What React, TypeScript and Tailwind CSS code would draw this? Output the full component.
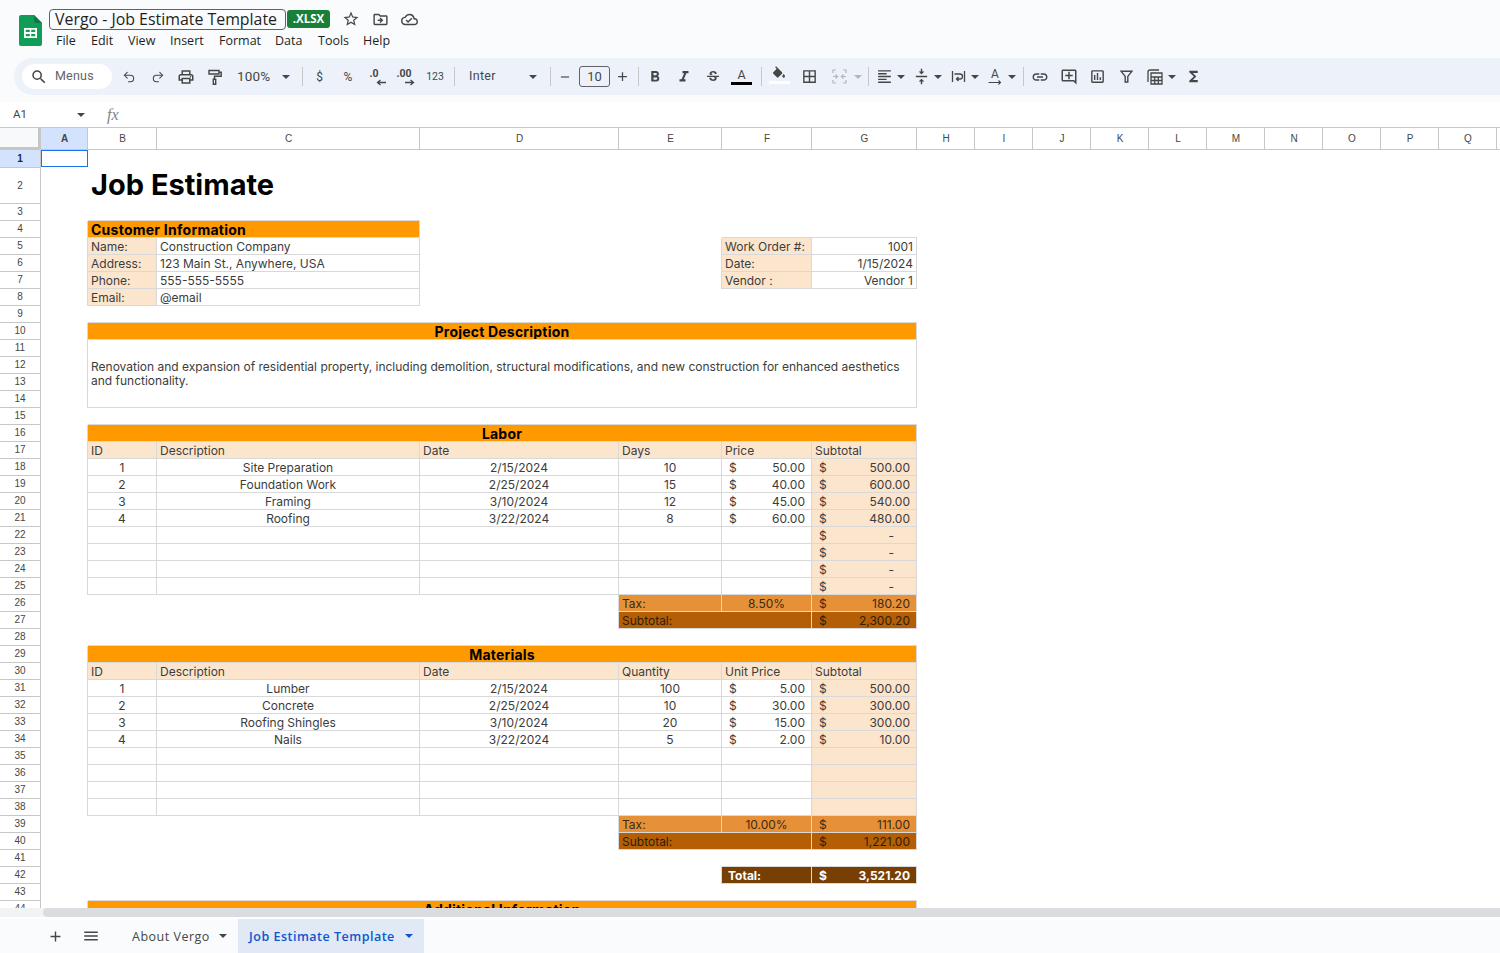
import React from "react";
import {
  MdOutlinePrint, MdSearch, MdAdd, MdRemove, MdFormatBold, MdFormatItalic,
  MdStrikethroughS, MdBorderAll, MdFormatAlignLeft, MdVerticalAlignCenter, MdLink, MdOutlineAddComment,
  MdOutlineAssessment, MdFunctions, MdStarBorder, MdOutlineDriveFileMove,
  MdOutlineCloudDone, MdMenu,
} from "react-icons/md";
import { Undo2, Redo2 } from "lucide-react";

const ink = "#444746";

function Caret({ className = "border-t-[#444746]" }: { className?: string }) {
  return <span className={`w-0 h-0 border-x-[4px] border-t-[4px] border-x-transparent ${className}`} />;
}

function Btn({ className = "w-[29px]", children }: { className?: string; children: React.ReactNode }) {
  return <div className={`flex items-center justify-center shrink-0 h-full text-[#444746] ${className}`}>{children}</div>;
}

function Sep({ className = "" }: { className?: string }) {
  return <div className={`w-px h-[19px] bg-[#c7c7c7] shrink-0 ${className}`} />;
}

function Logo() {
  return (
    <svg width="23" height="31" viewBox="0 0 23 31" className="shrink-0">
      <path d="M2 0h13l8 8v21a2 2 0 0 1-2 2H2a2 2 0 0 1-2-2V2a2 2 0 0 1 2-2z" fill="#0f9d58" />
      <path d="M15 0l8 8h-6a2 2 0 0 1-2-2z" fill="#0b7a44" />
      <path d="M5 13h13v10H5z M6.8 14.8v2.3h4v-2.3z M12.2 14.8v2.3h4v-2.3z M6.8 18.9v2.3h4v-2.3z M12.2 18.9v2.3h4v-2.3z" fill="#fff" fillRule="evenodd" />
    </svg>
  );
}

function Decimal({ label, right }: { label: string; right?: boolean }) {
  return (
    <div className="relative w-[20px] h-[20px]">
      <span className={`absolute top-[1px] text-[10.5px] font-bold leading-[12px] font-['Roboto',sans-serif] text-[#444746] ${right ? "left-[1px]" : "left-[3px]"}`}>{label}</span>
      <svg width="10" height="7" viewBox="0 0 10 7" className="absolute top-[12px] left-[9px]">
        {right ? (
          <path d="M0 3.5h8M5.5 1L8.5 3.5 5.5 6" fill="none" stroke={ink} strokeWidth="1.3" />
        ) : (
          <path d="M10 3.5H2M4.5 1L1.5 3.5 4.5 6" fill="none" stroke={ink} strokeWidth="1.3" />
        )}
      </svg>
    </div>
  );
}

function CaretIcon({ children }: { children: React.ReactNode }) {
  return (
    <div className="flex items-center w-[37px] h-full shrink-0 text-[#444746]">
      <div className="w-[18px] flex justify-center">{children}</div>
      <div className="ml-[4px] w-[8px] flex"><Caret /></div>
    </div>
  );
}

function Toolbar() {
  return (
    <div className="ml-[14px] h-[37px] rounded-l-full bg-[#edf2fa] flex items-center pl-[8px] font-['Roboto',sans-serif]">
      <div className="w-[90px] h-[25px] rounded-full bg-white flex items-center pl-[8px] shrink-0">
        <MdSearch size={18} color={ink} />
        <span className="ml-[7px] text-[12.5px] text-[#5f6368] tracking-[0.2px]">Menus</span>
      </div>
      <Btn className="ml-[2px] w-[29px]"><Undo2 size={14} strokeWidth={1.8} /></Btn>
      <Btn className="w-[29px]"><Redo2 size={14} strokeWidth={1.8} /></Btn>
      <Btn className="w-[28px]"><MdOutlinePrint size={18} /></Btn>
      <Btn className="w-[29px]">
        <svg width="14" height="16" viewBox="0 0 14 16" fill="none" stroke={ink} strokeWidth="1.4">
          <path d="M1 1.5h10v3.5H1z" />
          <path d="M11 3.2h2.2v4H6.5v3" />
          <path d="M5.3 10.2h2.4v5H5.3z" />
        </svg>
      </Btn>
      <div className="w-[65px] h-full flex items-center pl-[8px] shrink-0">
        <span className="text-[13.5px] text-[#444746] w-[45px] tracking-[0.2px]">100%</span>
        <span className="flex"><Caret /></span>
      </div>
      <Sep className="ml-[8px]" />
      <Btn className="ml-[2px] w-[29px] text-[12px] text-[#5f6368]">$</Btn>
      <Btn className="w-[28px] text-[12px] text-[#5f6368]">%</Btn>
      <Btn className="w-[29px]"><Decimal label=".0" /></Btn>
      <Btn className="w-[29px]"><Decimal label=".00" right /></Btn>
      <Btn className="w-[30px] text-[10.5px] text-[#5f6368]">123</Btn>
      <Sep className="ml-[4px]" />
      <div className="w-[91px] h-full flex items-center pl-[14px] shrink-0">
        <span className="w-[60px] text-[12.5px] text-[#444746] tracking-[0.3px]">Inter</span>
        <span className="flex"><Caret /></span>
      </div>
      <Sep className="ml-[4px]" />
      <Btn className="w-[28px]"><MdRemove size={14} /></Btn>
      <div className="w-[31px] h-[21px] rounded-[3px] border border-[#5f6368] shrink-0 flex items-center justify-center text-[13px] text-[#444746]">10</div>
      <Btn className="w-[24px]"><MdAdd size={15} /></Btn>
      <Sep className="ml-[4px]" />
      <Btn className="ml-[1px] w-[29px]"><MdFormatBold size={18} /></Btn>
      <Btn className="w-[29px]"><MdFormatItalic size={18} /></Btn>
      <Btn className="w-[29px]"><MdStrikethroughS size={16} /></Btn>
      <Btn className="w-[29px] flex-col">
        <span className="text-[12.5px] leading-[13px] text-[#444746]">A</span>
        <span className="w-[21px] h-[3px] bg-black mt-[1px]" />
      </Btn>
      <Sep className="ml-[5px]" />
      <Btn className="ml-[2px] w-[30px] flex-col">
        <svg width="16" height="16" viewBox="0 0 24 20" className="mt-[-4px]">
          <path d="M16.56 8.94L7.62 0 6.21 1.41l2.38 2.38-5.15 5.15c-.59.59-.59 1.54 0 2.12l5.5 5.5c.29.29.68.44 1.06.44s.77-.15 1.06-.44l5.5-5.5c.59-.58.59-1.53 0-2.12zM19 11.5s-2 2.17-2 3.5c0 1.1.9 2 2 2s2-.9 2-2c0-1.33-2-3.5-2-3.5z" fill={ink} />
        </svg>
        <span className="w-[21px] h-[3px] bg-white" />
      </Btn>
      <Btn className="w-[30px]"><MdBorderAll size={17} /></Btn>
      <Btn className="w-[30px]">
        <svg width="15" height="15" viewBox="0 0 15 15" fill="none" stroke="#b4b7bb" strokeWidth="1.2">
          <path d="M4 1H1v3M11 1h3v3M4 14H1v-3M11 14h3v-3M1 7.5h4M3.5 5.5l2 2-2 2M14 7.5h-4M11.5 5.5l-2 2 2 2" />
        </svg>
      </Btn>
      <div className="w-[11px] flex shrink-0"><Caret className="border-t-[#b4b7bb]" /></div>
      <Sep className="ml-[3px]" />
      <div className="w-[6px] shrink-0" />
      <CaretIcon><MdFormatAlignLeft size={17} /></CaretIcon>
      <CaretIcon><MdVerticalAlignCenter size={17} /></CaretIcon>
      <CaretIcon>
        <svg width="15" height="15" viewBox="0 0 15 15" fill="none" stroke={ink} strokeWidth="1.3">
          <path d="M1.5 2v11M13.5 2v11M3.5 5h5.5a2 2 0 0 1 0 5H6M7.5 8l-2 2 2 2" />
        </svg>
      </CaretIcon>
      <CaretIcon>
        <div className="flex flex-col items-center">
          <span className="text-[12px] leading-[11px] text-[#444746]">A</span>
          <svg width="14" height="5" viewBox="0 0 14 5" fill="none" stroke={ink} strokeWidth="1.1"><path d="M0.5 2.5h12M10.5 0.5l2 2-2 2" /></svg>
        </div>
      </CaretIcon>
      <Sep />
      <Btn className="ml-[1px] w-[29px]"><MdLink size={18} /></Btn>
      <Btn className="w-[29px]"><MdOutlineAddComment size={18} /></Btn>
      <Btn className="w-[29px]"><MdOutlineAssessment size={17} /></Btn>
      <Btn className="w-[29px]">
        <svg width="13" height="13" viewBox="0 0 13 13" fill="none" stroke={ink} strokeWidth="1.4">
          <path d="M1 1.2h11L7.8 6.4V12H5.2V6.4z" />
        </svg>
      </Btn>
      <Btn className="w-[27px]">
        <svg width="16" height="16" viewBox="0 0 16 16" fill="none" stroke={ink} strokeWidth="1.3">
          <path d="M1 13V3a2 2 0 0 1 2-2h9" />
          <path d="M4 4h11v11H4z" />
          <path d="M4 8h11M4 11.5h11M7.7 8v7M11.3 8v7" />
        </svg>
      </Btn>
      <div className="w-[8px] flex shrink-0"><Caret /></div>
      <Btn className="ml-[3px] w-[29px]"><MdFunctions size={17} /></Btn>
    </div>
  );
}

function Header() {
  return (
    <div className="bg-[#f9fbfd] h-[102px] shrink-0">
      <div className="h-[58px] flex pl-[19px] font-['Open_Sans',sans-serif]">
        <div className="pt-[15px]"><Logo /></div>
        <div className="ml-[7px] pt-[9px]">
          <div className="flex items-center h-[20px]">
            <div className="w-[237px] h-[21px] border border-[#5f6368] rounded-[4px] pl-[5px] text-[15.9px] leading-[18px] text-[#1f1f1f] whitespace-nowrap">Vergo - Job Estimate Template</div>
            <div className="ml-px w-[43px] h-[18px] rounded-[3px] bg-[#188038] text-white text-[11.5px] font-bold flex items-center justify-center">.XLSX</div>
            <div className="ml-[11px] w-[20px] flex justify-center"><MdStarBorder size={18} color={ink} /></div>
            <div className="ml-[9px] w-[20px] flex justify-center"><MdOutlineDriveFileMove size={17} color={ink} /></div>
            <div className="ml-[9px] w-[20px] flex justify-center"><MdOutlineCloudDone size={17} color={ink} /></div>
          </div>
          <div className="flex mt-[3px] ml-[7px] text-[12.5px] leading-[18px] text-[#1f1f1f]">
            <span className="w-[35px]">File</span>
            <span className="w-[37px]">Edit</span>
            <span className="w-[42px]">View</span>
            <span className="w-[49px]">Insert</span>
            <span className="w-[56px]">Format</span>
            <span className="w-[43px]">Data</span>
            <span className="w-[45px]">Tools</span>
            <span>Help</span>
          </div>
        </div>
      </div>
      <Toolbar />
    </div>
  );
}

function FormulaBar() {
  return (
    <div className="h-[25px] shrink-0 bg-white flex items-center font-['Roboto',sans-serif]">
      <span className="ml-[13px] w-[64px] text-[11.5px] text-[#444746]">A1</span>
      <Caret />
      <span className="ml-[22px] text-[16px] italic text-[#80868b] font-['Liberation_Serif',serif]">fx</span>
    </div>
  );
}

const smallCols = ["H", "I", "J", "K", "L", "M", "N", "O", "P", "Q"];

function ColHeaders() {
  const head = "h-full shrink-0 flex items-center justify-center pl-px border-r border-[#c7c7c7] text-[10px] text-[#444746] font-['Liberation_Sans',sans-serif]";
  return (
    <div className="h-[23px] shrink-0 flex border-y border-[#c7c7c7] bg-white overflow-hidden">
      <div className="w-[41px] h-full shrink-0 bg-[#f8f9fa] border-r-[3px] border-b-[2px] border-[#c4c7c5]" />
      <div className={`${head} w-[47px] bg-[#d3e3fd] font-bold text-[#0b2a5c]`}>A</div>
      <div className={`${head} w-[69px]`}>B</div>
      <div className={`${head} w-[263px]`}>C</div>
      <div className={`${head} w-[199px]`}>D</div>
      <div className={`${head} w-[103px]`}>E</div>
      <div className={`${head} w-[90px]`}>F</div>
      <div className={`${head} w-[105px]`}>G</div>
      {smallCols.map((c) => (
        <div key={c} className={`${head} w-[58px]`}>{c}</div>
      ))}
      <div className={`${head} w-[58px]`} />
    </div>
  );
}

const rowNums = Array.from({ length: 44 }, (_, i) => i + 1);

function RowHeaders() {
  return (
    <div className="w-[41px] shrink-0 border-r border-[#c7c7c7] font-['Liberation_Sans',sans-serif] text-[10px] text-[#444746]">
      {rowNums.map((n) => (
        <div
          key={n}
          className={`flex items-center justify-center pb-px border-b border-[#c7c7c7] ${n === 1 ? "h-[18px] bg-[#d3e3fd] font-bold text-[#0b2a5c]" : n === 2 ? "h-[36px]" : "h-[17px]"}`}
        >
          {n}
        </div>
      ))}
    </div>
  );
}

const line = "border-r border-b border-[#d9d9d9]";
const cellBase = "overflow-hidden whitespace-nowrap leading-[18px] h-[17px]";
const peach = "bg-[#fce5cd]";
const orange = "bg-[#ff9900]";
const tax = "bg-[#e69138]";
const sub = "bg-[#b45f06]";

function Row({ children, edge = false, className = "h-[17px]" }: { children?: React.ReactNode; edge?: boolean; className?: string }) {
  return (
    <div className={`grid grid-cols-[47px_69px_263px_199px_103px_90px_105px] ${className}`}>
      <div className={edge ? "border-r border-[#d9d9d9]" : ""} />
      {children}
    </div>
  );
}

function T({ className = "", children }: { className?: string; children?: React.ReactNode }) {
  return <div className={`${cellBase} ${line} px-[3px] ${className}`}>{children}</div>;
}

function Money({ value, className = "" }: { value?: string; className?: string }) {
  return (
    <div className={`${cellBase} ${line} pl-[7px] pr-[6px] flex justify-between ${className}`}>
      <span>$</span>
      <span className={value === "-" ? "pr-[16px]" : ""}>{value}</span>
    </div>
  );
}

function TopEdge({ from }: { from: "B-C" | "B-G" | "F-G" }) {
  if (from === "B-C") return <Row><div className="col-span-2 border-b border-[#d9d9d9]" /></Row>;
  if (from === "B-G") return <Row><div className="col-span-6 border-b border-[#d9d9d9]" /></Row>;
  return <Row><div className="col-span-4" /><div className="col-span-2 border-b border-[#d9d9d9]" /></Row>;
}

function SectionTitle({ children }: { children: React.ReactNode }) {
  return (
    <Row edge>
      <div className={`col-span-6 ${orange} ${line} text-center font-bold text-black text-[14px] tracking-[0.2px] leading-[17px] h-[17px] overflow-hidden`}>{children}</div>
    </Row>
  );
}

function HeadRow({ labels }: { labels: string[] }) {
  return (
    <Row edge>
      {labels.map((l) => (
        <T key={l} className={peach}>{l}</T>
      ))}
    </Row>
  );
}

type Item = { id: string; desc: string; date: string; qty: string; price: string; total: string };

function ItemRow({ item }: { item?: Item }) {
  return (
    <Row edge>
      <T className="text-center">{item?.id}</T>
      <T className="text-center">{item?.desc}</T>
      <T className="text-center">{item?.date}</T>
      <T className="text-center">{item?.qty}</T>
      {item ? <Money value={item.price} /> : <T />}
      {item ? <Money value={item.total} className={peach} /> : <T className={peach} />}
    </Row>
  );
}

function DashRow() {
  return (
    <Row edge>
      <T /><T /><T /><T /><T />
      <Money value="-" className={peach} />
    </Row>
  );
}

function TaxRows({ pct, tx, st }: { pct: string; tx: string; st: string }) {
  return (
    <>
      <Row>
        <div /><div />
        <div className="border-r border-[#d9d9d9]" />
        <T className={`${tax} text-[#3a2a14]`}>Tax:</T>
        <T className={`${tax} text-[#3a2a14] text-center`}>{pct}</T>
        <Money value={tx} className={`${tax} text-[#3a2a14]`} />
      </Row>
      <Row>
        <div /><div />
        <div className="border-r border-[#d9d9d9]" />
        <T className={`${sub} text-[#2e2008] col-span-2`}>Subtotal:</T>
        <Money value={st} className={`${sub} text-[#2e2008]`} />
      </Row>
    </>
  );
}

const labor: Item[] = [
  { id: "1", desc: "Site Preparation", date: "2/15/2024", qty: "10", price: "50.00", total: "500.00" },
  { id: "2", desc: "Foundation Work", date: "2/25/2024", qty: "15", price: "40.00", total: "600.00" },
  { id: "3", desc: "Framing", date: "3/10/2024", qty: "12", price: "45.00", total: "540.00" },
  { id: "4", desc: "Roofing", date: "3/22/2024", qty: "8", price: "60.00", total: "480.00" },
];

const materials: Item[] = [
  { id: "1", desc: "Lumber", date: "2/15/2024", qty: "100", price: "5.00", total: "500.00" },
  { id: "2", desc: "Concrete", date: "2/25/2024", qty: "10", price: "30.00", total: "300.00" },
  { id: "3", desc: "Roofing Shingles", date: "3/10/2024", qty: "20", price: "15.00", total: "300.00" },
  { id: "4", desc: "Nails", date: "3/22/2024", qty: "5", price: "2.00", total: "10.00" },
];

const customer = [
  ["Name:", "Construction Company", "Work Order #:", "1001"],
  ["Address:", "123 Main St., Anywhere, USA", "Date:", "1/15/2024"],
  ["Phone:", "555-555-5555", "Vendor :", "Vendor 1"],
  ["Email:", "@email", "", ""],
];

function Sheet() {
  return (
    <div className="flex-1 overflow-hidden font-['Inter',sans-serif] text-[12px] text-[#3c3c3c]">
      <div className="grid grid-cols-[47px_1fr] h-[18px]">
        <div className="h-[17px] border border-[#1a73e8]" />
      </div>
      <Row className="h-[36px]">
        <div className="col-span-6 pl-[3px] text-[29px] font-bold text-black leading-[34px] whitespace-nowrap">Job Estimate</div>
      </Row>
      <TopEdge from="B-C" />
      <Row edge>
        <div className={`col-span-2 ${orange} ${line} px-[3px] font-bold text-black text-[14px] tracking-[0.25px] leading-[17px] h-[17px] overflow-hidden`}>Customer Information</div>
        <div className="col-span-2" />
        <div className="col-span-2 border-b border-[#d9d9d9]" />
      </Row>
      {customer.map((c) => (
        <Row edge key={c[0]}>
          <T className={peach}>{c[0]}</T>
          <T>{c[1]}</T>
          <div />
          {c[2] ? <div className="border-r border-[#d9d9d9]" /> : <div />}
          {c[2] ? <T className={peach}>{c[2]}</T> : <div />}
          {c[2] ? <T className="text-right">{c[3]}</T> : <div />}
        </Row>
      ))}
      <TopEdge from="B-G" />
      <SectionTitle>Project Description</SectionTitle>
      <Row edge className="h-[68px]">
        <div className={`col-span-6 ${line} px-[3px] flex items-center leading-[14px]`}>
          Renovation and expansion of residential property, including demolition, structural modifications, and new construction for enhanced aesthetics and functionality.
        </div>
      </Row>
      <TopEdge from="B-G" />
      <SectionTitle>Labor</SectionTitle>
      <HeadRow labels={["ID", "Description", "Date", "Days", "Price", "Subtotal"]} />
      {labor.map((i) => <ItemRow key={i.id} item={i} />)}
      <DashRow /><DashRow /><DashRow /><DashRow />
      <TaxRows pct="8.50%" tx="180.20" st="2,300.20" />
      <TopEdge from="B-G" />
      <SectionTitle>Materials</SectionTitle>
      <HeadRow labels={["ID", "Description", "Date", "Quantity", "Unit Price", "Subtotal"]} />
      {materials.map((i) => <ItemRow key={i.id} item={i} />)}
      <ItemRow /><ItemRow /><ItemRow /><ItemRow />
      <TaxRows pct="10.00%" tx="111.00" st="1,221.00" />
      <TopEdge from="F-G" />
      <Row>
        <div /><div /><div />
        <div className="border-r border-[#d9d9d9]" />
        <T className="bg-[#783f04] text-white font-bold pl-[6px]">Total:</T>
        <Money value="3,521.20" className="bg-[#783f04] text-white font-bold" />
      </Row>
      <TopEdge from="B-G" />
      <SectionTitle>Additional Information</SectionTitle>
    </div>
  );
}

function Tabs() {
  return (
    <div className="h-[34px] shrink-0 mt-[2px] bg-[#f9fbfd] flex items-center font-['Open_Sans',sans-serif] text-[12.5px] tracking-[0.5px]">
      <div className="ml-[46px] w-[18px] flex justify-center"><MdAdd size={17} color={ink} /></div>
      <div className="ml-[17px] w-[19px] flex justify-center"><MdMenu size={18} color={ink} /></div>
      <span className="ml-[32px] w-[78px] pt-[3px] text-[#444746] whitespace-nowrap">About Vergo</span>
      <span className="ml-[9px] flex"><Caret /></span>
      <div className="ml-[11px] w-[186px] h-full bg-[#e1e9f7] flex items-center pl-[11px] text-[#0b57d0] font-semibold">
        <span className="w-[147px] pt-[3px] whitespace-nowrap">Job Estimate Template</span>
        <span className="ml-[9px] flex"><Caret className="border-t-[#0b57d0]" /></span>
      </div>
    </div>
  );
}

export default function App() {
  return (
    <div className="w-[1500px] h-[953px] overflow-hidden flex flex-col bg-white">
      <Header />
      <FormulaBar />
      <ColHeaders />
      <div className="h-[758px] shrink-0 flex overflow-hidden">
        <RowHeaders />
        <Sheet />
      </div>
      <div className="h-[9px] shrink-0 flex bg-[#f1f3f4]">
        <div className="w-[43px]" />
        <div className="flex-1 bg-[#dadce0] rounded-l-full" />
      </div>
      <Tabs />
    </div>
  );
}
